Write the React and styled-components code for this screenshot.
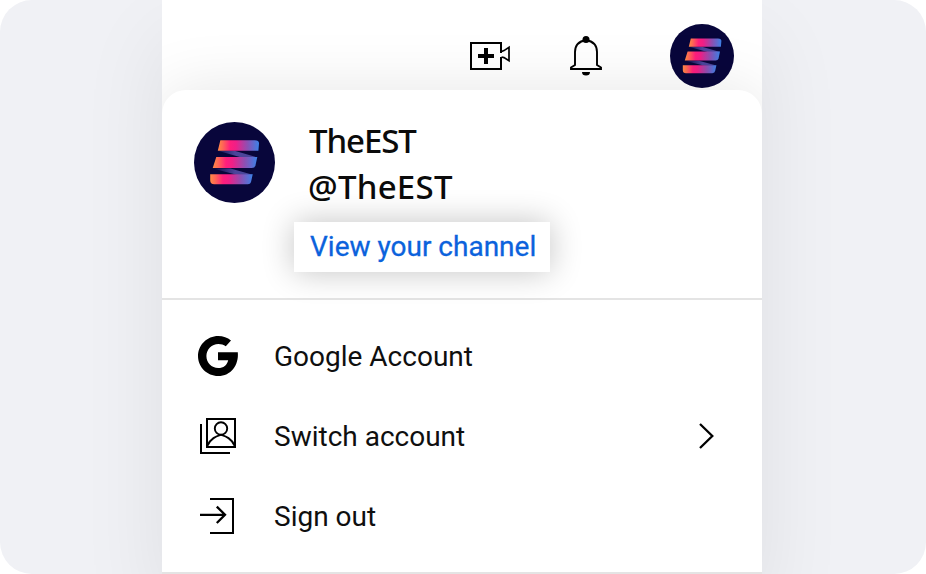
import React from "react";
import styled, { createGlobalStyle } from "styled-components";

const Global = createGlobalStyle`
  *, *::before, *::after { box-sizing: border-box; }
  body { margin: 0; background: #fff; }
`;

const Stage = styled.main`
  width: 926px;
  height: 574px;
  display: flex;
  justify-content: center;
  padding-right: 2px;
  overflow: hidden;
  border-radius: 32px;
  background: #f0f1f5;
  font-family: Roboto, "Liberation Sans", sans-serif;
`;

const Phone = styled.section`
  width: 600px;
  height: 574px;
  display: flex;
  flex-direction: column;
  background: #fff;
  box-shadow: 0 40px 80px rgba(0, 0, 0, 0.08);
`;

const Clip = styled.div`
  flex: 1;
  display: flex;
  flex-direction: column;
  overflow: hidden;
`;

const TopBar = styled.header`
  height: 90px;
  flex: none;
  display: flex;
  align-items: flex-start;
  justify-content: flex-end;
  padding: 24px 28px 0 0;
`;

const IconButton = styled.button`
  display: flex;
  padding: 0;
  border: 0;
  background: none;
  margin: ${(p) => p.$margin};
  svg { display: block; }
`;

const Menu = styled.div`
  position: relative;
  height: 484px;
  display: flex;
  flex-direction: column;
  border-radius: 24px 24px 0 0;
  border-bottom: 2px solid #e4e4e4;
  background: #fff;
  box-shadow: 0 0 64px rgba(0, 0, 0, 0.1);
`;

const Profile = styled.div`
  height: 210px;
  flex: none;
  display: flex;
  padding: 32px 32px 0;
  border-bottom: 2px solid #e4e4e4;
  svg { flex: none; }
`;

const Identity = styled.div`
  display: flex;
  flex-direction: column;
  align-items: flex-start;
  margin-left: 19px;
`;

const Name = styled.div`
  height: 46px;
  margin: 0 0 0 ${(p) => p.$indent};
  font: 500 33px/38px "Noto Sans", sans-serif;
  letter-spacing: ${(p) => p.$tracking};
  color: #0b0b0b;
  white-space: nowrap;
`;

const ChannelLink = styled.a`
  width: 256px;
  height: 50px;
  margin-top: 8px;
  padding-left: 16px;
  background: #fff;
  box-shadow: 0 0 32px rgba(0, 0, 0, 0.24);
  color: #0b62dc;
  font-size: 28px;
  -webkit-text-stroke: 0.3px #0b62dc;
  line-height: 49px;
  white-space: nowrap;
`;

const Items = styled.nav`
  display: flex;
  flex-direction: column;
  padding-top: 16px;
`;

const Item = styled.div`
  height: 80px;
  display: flex;
  align-items: center;
  padding: 0 43px 0 32px;
`;

const ItemIcon = styled.span`
  width: 48px;
  height: 48px;
  margin-right: 32px;
  svg { display: block; }
`;

const Label = styled.span`
  flex: 1;
  padding-top: 2px;
  color: #0f0f0f;
  font-size: 28px;
  line-height: 40px;
  white-space: nowrap;
`;

function Avatar({ size, id }) {
  return (
    <svg width={size} height={size} viewBox="0 0 80 80">
      <defs>
        <linearGradient id={id}>
          <stop offset="0" stopColor="#ff8a45" />
          <stop offset=".12" stopColor="#ff6755" />
          <stop offset=".3" stopColor="#ff1e7c" />
          <stop offset=".44" stopColor="#f01f87" />
          <stop offset=".72" stopColor="#8d50b3" />
          <stop offset="1" stopColor="#3b82e8" />
        </linearGradient>
        <linearGradient id={`${id}-fold`}>
          <stop offset="0" stopColor="#08063b" />
          <stop offset=".5" stopColor="#4b459b" />
          <stop offset="1" stopColor="#4b459b" />
        </linearGradient>
      </defs>
      <circle cx="40" cy="40" r="40" fill="#08063b" />
      <path d="M23.5 28.5H40L62.5 35H47Z M18.5 46H36L58 52H42Z" fill={`url(#${id}-fold)`} />
      <path d="M26 18H60Q64.5 18 64.2 21.5L63.6 28.5H23.5Z" fill={`url(#${id})`} />
      <path d="M22 34.5H62.5L60.7 43Q60 45.5 57 45.5H18.5Z" fill={`url(#${id})`} />
      <path d="M16 51.5H58L56.5 58.5Q56 61.5 53 61.5H20Q16 61.5 16 57.5Z" fill={`url(#${id})`} />
    </svg>
  );
}

function CreateIcon() {
  return (
    <svg width="42" height="30" fill="none" stroke="#000" strokeWidth="2">
      <path d="M31 11V1H1V27H31V15" />
      <path d="M16 6V22M8 14H24" strokeWidth="4" />
      <path d="M31.5 9.5L34 8.6L39 5.3V18.7L34 15.6L31.5 15" strokeWidth="1.7" />
    </svg>
  );
}

function BellIcon() {
  return (
    <svg width="32" height="40" fill="none" stroke="#000" strokeWidth="2">
      <path d="M5 29V16Q5 6 16 4Q27 6 27 16V29L31 31.5V33H1V31.5Z" strokeWidth="1.9" />
      <circle cx="16" cy="3.5" r="3.5" fill="#000" stroke="none" />
      <path d="M12 36H20Q20 39.5 16 39.5T12 36Z" fill="#000" stroke="none" />
    </svg>
  );
}

function GoogleIcon() {
  return (
    <svg width="48" height="48">
      <path
        fill="#000"
        d="M24 20.2H43.8C45 33 37 44 24.2 44C13.1 44 4 35 4 24S13.1 4 24.2 4C29.2 4 33.5 5.6 37 8.6L31.8 14.2C29.6 12.6 27.2 11.9 24.4 11.9C17.8 11.9 12.4 17.3 12.4 24S17.6 36 24.2 36C29.6 36 33 33.2 34.2 28.2H24Z"
      />
    </svg>
  );
}

function SwitchIcon() {
  return (
    <svg width="48" height="48" fill="none" stroke="#000" strokeWidth="2">
      <path d="M13 7H41V35H13Z M7 12V41H36" />
      <circle cx="27" cy="16.5" r="6.2" strokeWidth="1.9" />
      <path d="M13.5 33.5C17 26 22 24.5 27 22.8C32 24.5 37 26 40.5 33.5" strokeWidth="1.9" />
    </svg>
  );
}

function SignOutIcon() {
  return (
    <svg width="48" height="48" fill="none" stroke="#000" strokeWidth="2">
      <path d="M16 7H39V41H16" />
      <path d="M6 22.8H31M22.8 14.6L31 22.8L22.8 31" strokeWidth="2.3" />
    </svg>
  );
}

function Chevron() {
  return (
    <svg width="24" height="28" fill="none" stroke="#000" strokeWidth="2.3">
      <path d="M5 2L17.3 14L5 26" />
    </svg>
  );
}

export default function App() {
  return (
    <>
      <Global />
      <Stage>
        <Phone>
          <Clip>
            <TopBar>
              <IconButton aria-label="Create" $margin="18px 58px 0 0"><CreateIcon /></IconButton>
              <IconButton aria-label="Notifications" $margin="12px 68px 0 0"><BellIcon /></IconButton>
              <Avatar size={64} id="avatar-bar" />
            </TopBar>
            <Menu>
              <Profile>
                <Avatar size={81} id="avatar-menu" />
                <Identity>
                  <Name $indent="15px" $tracking="-1.1px">TheEST</Name>
                  <Name $indent="14px" $tracking="0.25px">@TheEST</Name>
                  <ChannelLink>View your channel</ChannelLink>
                </Identity>
              </Profile>
              <Items>
                <Item>
                  <ItemIcon><GoogleIcon /></ItemIcon>
                  <Label>Google Account</Label>
                </Item>
                <Item>
                  <ItemIcon><SwitchIcon /></ItemIcon>
                  <Label>Switch account</Label>
                  <Chevron />
                </Item>
                <Item>
                  <ItemIcon><SignOutIcon /></ItemIcon>
                  <Label>Sign out</Label>
                </Item>
              </Items>
            </Menu>
          </Clip>
        </Phone>
      </Stage>
    </>
  );
}
